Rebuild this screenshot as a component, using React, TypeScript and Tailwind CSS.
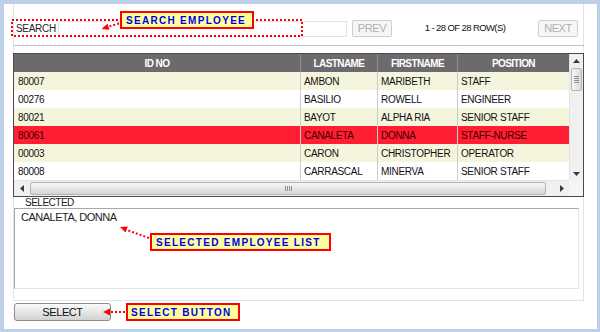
import React from "react";

type Row = { id: string; last: string; first: string; pos: string; kind: "beige" | "white" | "red" };

const rows: Row[] = [
  { id: "80007", last: "AMBON", first: "MARIBETH", pos: "STAFF", kind: "beige" },
  { id: "00276", last: "BASILIO", first: "ROWELL", pos: "ENGINEER", kind: "white" },
  { id: "80021", last: "BAYOT", first: "ALPHA RIA", pos: "SENIOR STAFF", kind: "beige" },
  { id: "80061", last: "CANALETA", first: "DONNA", pos: "STAFF-NURSE", kind: "red" },
  { id: "00003", last: "CARON", first: "CHRISTOPHER", pos: "OPERATOR", kind: "beige" },
  { id: "80008", last: "CARRASCAL", first: "MINERVA", pos: "SENIOR STAFF", kind: "white" },
];

function Tri({ dir }: { dir: "up" | "down" | "left" | "right" }) {
  const pts =
    dir === "up"
      ? "0,4 3.5,0 7,4"
      : dir === "down"
      ? "0,0 7,0 3.5,4"
      : dir === "left"
      ? "4,0 4,7 0,3.5"
      : "0,0 0,7 4,3.5";
  const w = dir === "up" || dir === "down" ? 7 : 4;
  const h = dir === "up" || dir === "down" ? 4 : 7;
  return (
    <svg width={w} height={h} viewBox={`0 0 ${w} ${h}`}>
      <polygon points={pts} fill="#3a3a3a" />
    </svg>
  );
}

export default function App() {
  return (
    <div className="w-[600px] h-[332px] bg-[#bdd0e7] pl-[4px] pt-[4px] font-['Liberation_Sans',Arial,sans-serif] text-[#1a1a1a]">
      <div className="relative w-[593px] h-[325px] bg-white">
        {/* main frame */}
        <div className="ml-[9px] w-[571px] h-[297px] border-x border-b border-[#dde4ec] pt-[16px] flex flex-col">
          {/* search row */}
          <div className="flex items-center h-[17px]">
            <span className="w-[44px] pl-[2px] text-[10px] tracking-[-0.3px] text-[#222]">SEARCH</span>
            <div className="w-[289px] h-[16px] border border-[#dfe5ec] bg-white" />
            <div className="ml-[5px] w-[40px] h-[17px] border border-[#cfcfcf] rounded-[2px] bg-[#f6f6f6] text-[11px] text-[#b0b0b0] tracking-[-0.4px] flex items-center justify-center">
              PREV
            </div>
            <span className="flex-1 text-center text-[9.5px] tracking-[-0.6px] text-[#111]">1 - 28 OF 28 ROW(S)</span>
            <div className="mr-[5px] w-[40px] h-[17px] border border-[#cfcfcf] rounded-[2px] bg-[#f6f6f6] text-[11px] text-[#b0b0b0] tracking-[-0.4px] flex items-center justify-center">
              NEXT
            </div>
          </div>

          <div className="mt-[8px] -mx-px h-px bg-[#c4c4c4]" />

          {/* table */}
          <div className="mt-[7px] -mx-px h-[144px] border border-[#4a4a4a] flex flex-col">
            <div className="flex h-[126px]">
              <div className="w-[555px] flex flex-col">
                <div className="flex h-[18px] bg-[#6c6a6d] text-white font-bold text-[10px] tracking-[-0.6px]">
                  <div className="w-[287px] border-r border-[#8f8d90] flex items-center justify-center">ID NO</div>
                  <div className="w-[77px] border-r border-[#8f8d90] flex items-center justify-center">LASTNAME</div>
                  <div className="w-[80px] border-r border-[#8f8d90] flex items-center justify-center">FIRSTNAME</div>
                  <div className="w-[111px] flex items-center justify-center">POSITION</div>
                </div>
                {rows.map((r) => {
                  const bg =
                    r.kind === "red" ? "bg-[#ff1e32] text-[#3a0000]" : r.kind === "beige" ? "bg-[#f5f5de] text-[#111]" : "bg-white text-[#111]";
                  return (
                    <div key={r.id} className={`flex h-[18px] text-[10px] tracking-[-0.3px] ${bg}`}>
                      <div className="w-[287px] border-r border-[#cccccc] pl-[4px] flex items-center">{r.id}</div>
                      <div className="w-[77px] border-r border-[#cccccc] pl-[3px] flex items-center">{r.last}</div>
                      <div className="w-[80px] border-r border-[#cccccc] pl-[3px] flex items-center">{r.first}</div>
                      <div className="w-[111px] pl-[3px] flex items-center">{r.pos}</div>
                    </div>
                  );
                })}
              </div>
              {/* vertical scrollbar */}
              <div className="w-[14px] bg-[#f0f0f0] border-l border-[#e2e2e2] flex flex-col items-center">
                <div className="h-[13px] flex items-center justify-center">
                  <Tri dir="up" />
                </div>
                <div className="mt-[1px] w-[11px] h-[23px] rounded-[2px] border border-[#b3b3b3] bg-gradient-to-r from-[#f7f7f7] to-[#dadada] flex flex-col items-center justify-center gap-[1px]">
                  <div className="w-[5px] h-px bg-[#8c8c8c]" />
                  <div className="w-[5px] h-px bg-[#8c8c8c]" />
                  <div className="w-[5px] h-px bg-[#8c8c8c]" />
                  <div className="w-[5px] h-px bg-[#8c8c8c]" />
                </div>
                <div className="flex-1" />
                <div className="h-[13px] flex items-center justify-center">
                  <Tri dir="down" />
                </div>
              </div>
            </div>
            {/* horizontal scrollbar */}
            <div className="flex h-[16px]">
              <div className="w-[555px] bg-[#f0f0f0] border-t border-[#e2e2e2] flex items-center">
                <div className="w-[16px] flex items-center justify-center">
                  <Tri dir="left" />
                </div>
                <div className="w-[516px] h-[13px] rounded-[2px] border border-[#b3b3b3] bg-gradient-to-b from-[#f7f7f7] to-[#d6d6d6] flex items-center justify-center gap-[1px]">
                  <div className="w-px h-[5px] bg-[#8c8c8c]" />
                  <div className="w-px h-[5px] bg-[#8c8c8c]" />
                  <div className="w-px h-[5px] bg-[#8c8c8c]" />
                  <div className="w-px h-[5px] bg-[#8c8c8c]" />
                </div>
                <div className="w-[9px]" />
                <div className="w-[14px] flex items-center justify-center">
                  <Tri dir="right" />
                </div>
              </div>
              <div className="w-[14px] bg-[#f5f5f5]" />
            </div>
          </div>

          {/* selected */}
          <div className="h-[11px] pl-[11px] text-[10px] leading-[11px] tracking-[-0.5px] text-[#222]">SELECTED</div>
          <div className="w-[565px] h-[81px] border border-t-[#a8a8a8] border-l-[#a8a8a8] border-b-[#e4e4e4] border-r-[#e4e4e4] pl-[6px] pt-[1px] text-[11px] leading-[14px] tracking-[-0.5px] text-[#222]">
            CANALETA, DONNA
          </div>
        </div>

        {/* select button */}
        <div className="mt-[2px] ml-[10px] w-[97px] h-[18px] rounded-[3px] border border-[#8c8c8c] bg-gradient-to-b from-[#fbfbfb] to-[#d2d2d2] text-[11px] tracking-[-0.4px] text-[#111] flex items-center justify-center">
          SELECT
        </div>

        {/* annotation overlay */}
        <svg className="absolute left-[-4px] top-[-4px] pointer-events-none" width={600} height={332} viewBox="0 0 600 332">
          <rect x={12} y={20} width={290} height={16} fill="none" stroke="#ff0000" strokeWidth={2} strokeDasharray="2 2" />
          {/* search arrow */}
          <line x1={119} y1={23.5} x2={109} y2={26.5} stroke="#ff0000" strokeWidth={2} strokeDasharray="2 2" />
          <polygon points="101.5,29 109.6,29.8 107.4,23.8" fill="#ff0000" />
          {/* selected list arrow */}
          <line x1={149} y1={238} x2={127} y2={230} stroke="#ff0000" strokeWidth={2} strokeDasharray="2 2" />
          <polygon points="120,227 127.8,226.4 125.6,232.4" fill="#ff0000" />
          {/* select button arrow */}
          <line x1={125} y1={312} x2={110} y2={312} stroke="#ff0000" strokeWidth={2} strokeDasharray="2 2" />
          <polygon points="103,312 110,308.5 110,315.5" fill="#ff0000" />
        </svg>

        {/* callouts */}
        <div className="absolute left-[116px] top-[7px] w-[134px] h-[18px] border-2 border-[#ff0000] bg-[#ffff9f] text-[#0000e6] font-bold text-[10px] tracking-[1.3px] flex items-center pl-[4px]">
          SEARCH EMPLOYEE
        </div>
        <div className="absolute left-[146px] top-[229px] w-[181px] h-[18px] border-2 border-[#ff0000] bg-[#ffff9f] text-[#0000e6] font-bold text-[10px] tracking-[1.3px] flex items-center pl-[4px]">
          SELECTED EMPLOYEE LIST
        </div>
        <div className="absolute left-[122px] top-[299px] w-[114px] h-[18px] border-2 border-[#ff0000] bg-[#ffff9f] text-[#0000e6] font-bold text-[10px] tracking-[1.3px] flex items-center pl-[3px]">
          SELECT BUTTON
        </div>
      </div>
    </div>
  );
}
